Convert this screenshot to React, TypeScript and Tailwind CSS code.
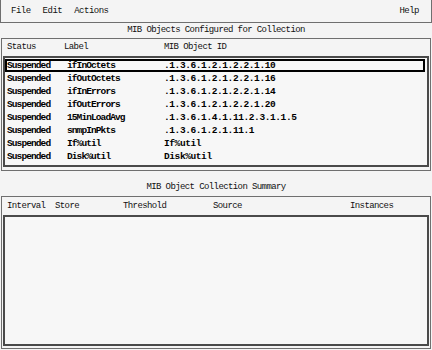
import React from "react";

const rows = [
  ["Suspended", "ifInOctets", ".1.3.6.1.2.1.2.2.1.10"],
  ["Suspended", "ifOutOctets", ".1.3.6.1.2.1.2.2.1.16"],
  ["Suspended", "ifInErrors", ".1.3.6.1.2.1.2.2.1.14"],
  ["Suspended", "ifOutErrors", ".1.3.6.1.2.1.2.2.1.20"],
  ["Suspended", "15MinLoadAvg", ".1.3.6.1.4.1.11.2.3.1.1.5"],
  ["Suspended", "snmpInPkts", ".1.3.6.1.2.1.11.1"],
  ["Suspended", "If%util", "If%util"],
  ["Suspended", "Disk%util", "Disk%util"],
];

export default function App() {
  return (
    <div
      className="w-[432px] h-[350px] bg-[#f4f4f4] text-[#111] flex flex-col overflow-hidden leading-none"
      style={{ fontFamily: '"Liberation Mono", "DejaVu Sans Mono", monospace' }}
    >
      <div className="shrink-0 h-[23px] border border-t-0 border-[#6f6f6f] flex items-center pl-[10px] pr-[12px] text-[9px] tracking-[-0.5px] pt-[1px]">
        <span className="mr-[12px]">File</span>
        <span className="mr-[12px]">Edit</span>
        <span>Actions</span>
        <span className="ml-auto">Help</span>
      </div>
      <div className="shrink-0 h-[15px] flex items-center justify-center text-[9px] tracking-[-0.6px]">
        MIB Objects Configured for Collection
      </div>
      <div className="shrink-0 h-[133px] border border-[#6f6f6f] mx-[1px] flex flex-col">
        <div className="shrink-0 h-[17px] flex items-center text-[9px] tracking-[-0.6px] pl-[5px]">
          <span className="w-[57px]">Status</span>
          <span className="w-[100px]">Label</span>
          <span>MIB Object ID</span>
        </div>
        <div className="flex-1 min-h-0 mx-[1px] mb-[3px] border-2 border-[#4a4a4a] bg-[#f7f7f7] pt-[1px] pr-[2px]">
          {rows.map((r, i) => (
            <div
              key={i}
              className={
                "h-[13px] flex items-center text-[9.5px] font-bold text-black " +
                (i === 0 ? "border-2 border-black" : "border-2 border-transparent")
              }
            >
              <span className="w-[60px] tracking-[-0.9px]">{r[0]}</span>
              <span className="w-[97px] tracking-[-0.9px]">{r[1]}</span>
              <span className="text-[9.5px] tracking-[-0.4px]">{r[2]}</span>
            </div>
          ))}
        </div>
      </div>
      <div className="shrink-0 h-[25px] flex items-end justify-center text-[9px] tracking-[-0.6px] pb-[4px]">
        MIB Object Collection Summary
      </div>
      <div className="flex-1 min-h-0 border border-[#6f6f6f] mx-[1px] mb-[1px] flex flex-col">
        <div className="shrink-0 h-[18px] flex items-center text-[9px] tracking-[-0.6px] pl-[5px]">
          <span className="w-[48px]">Interval</span>
          <span className="w-[68px]">Store</span>
          <span className="w-[90px]">Threshold</span>
          <span className="w-[137px]">Source</span>
          <span>Instances</span>
        </div>
        <div className="flex-1 mx-[1px] mb-[2px] border-2 border-[#4a4a4a] bg-[#f7f7f7]" />
      </div>
    </div>
  );
}
